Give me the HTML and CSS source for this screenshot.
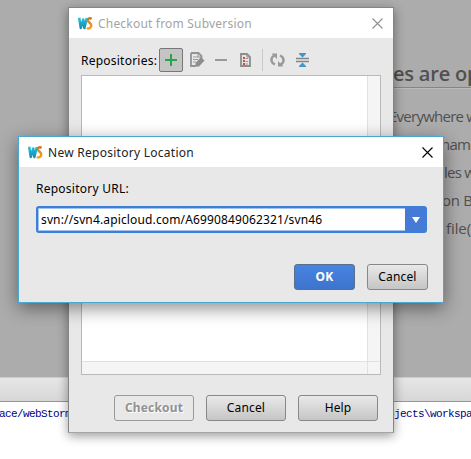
FILE: index.html
```html
<!DOCTYPE html>
<html lang="en">
<head>
<meta charset="utf-8">
<title>Checkout from Subversion</title>
<link rel="stylesheet" href="styles.css">
</head>
<body>
<svg class="defs" width="0" height="0">
  <defs>
    <linearGradient id="gw" x1="0" y1="0" x2="0" y2="1"><stop offset="0" stop-color="#1fc4dc"/><stop offset="1" stop-color="#1b8db5"/></linearGradient>
    <linearGradient id="gs" x1="0" y1="0" x2="0" y2="1"><stop offset="0" stop-color="#c9782c"/><stop offset="1" stop-color="#f5a31c"/></linearGradient>
    <symbol id="logo" viewBox="0 0 15 13">
      <path d="M1.2 .8 2.800 11 5.200 2.500 6.400 11 8.800 1" fill="none" stroke="url(#gw)" stroke-width="2.500" stroke-linejoin="round"/>
      <path d="M13.600 1.900C11.400.5 9.500 1.800 10 4c.5 1.600 3.400 2 3.200 4.800-.2 2.500-2.400 3.200-4.400 2.200" fill="none" stroke="url(#gs)" stroke-width="2.500"/>
    </symbol>
  </defs>
</svg>
<div class="desktop">
  <main class="editor">
    <h1 class="heading">es are op</h1>
    <p class="hint hint1">Everywhere w</p>
    <p class="hint hint2">name</p>
    <p class="hint hint3">les w</p>
    <p class="hint hint4">on Ba</p>
    <p class="hint hint5">file(</p>
  </main>
  <div class="strip"></div>
  <div class="console"><span class="path">ace/webStorm</span><span class="path tail">ojects\workspa</span></div>
</div>

<section class="dialog checkout">
  <header class="titlebar">
    <svg class="logo" width="15" height="13"><use href="#logo"/></svg>
    <span class="title">Checkout from Subversion</span>
    <svg class="close" width="11" height="11" viewBox="0 0 11 11"><path d="M.5.5l10 10M10.500.5l-10 10"/></svg>
  </header>
  <div class="toolbar">
    <span class="label">Repositories:</span>
    <span class="tool active"><svg width="12" height="12" viewBox="0 0 12 12"><path d="M6 0v12M0 6h12" stroke="#26a644" stroke-width="2"/></svg></span>
    <svg class="edit" width="15" height="16" viewBox="0 0 15 16"><path d="M1 1h7.500l3 3v2M1 1v13h5" fill="none" stroke="#939393" stroke-width="1.800"/><path d="M3 5h5M3 7.500h5M3 10h3" stroke="#999"/><path d="M8 1v4h4" fill="none" stroke="#939393"/><path d="M11 5l3.500 3.500-5.500 6H5.500V11z" fill="#8d8d8d"/></svg>
    <span class="minus"></span>
    <svg class="details" width="11" height="14" viewBox="0 0 11 14"><path d="M1 1h6l3 3v9H1z" fill="#e5e5e5" stroke="#8d8d8d" stroke-width="1.800"/><path d="M7 1v3h3" fill="none" stroke="#8d8d8d"/><path d="M3 4h2v2H3zM3 7h2v2H3zM3 10h2v2H3z" fill="#c9503f"/><path d="M5.500 5.500H8M5.500 8.500H8M5.500 11H8" stroke="#999"/></svg>
    <span class="separator"></span>
    <svg class="refresh" width="15" height="14" viewBox="0 0 15 14"><g fill="none" stroke="#999" stroke-width="2.400"><path d="M5 11.500C.3 9.500.300 4.500 4.600 2.200"/><path d="M10 2.500c4.700 2 4.700 7 .4 9.300"/></g><path d="M1.500 .5h5.500v5.500zM13.500 13.500H8V8z" fill="#999"/></svg>
    <svg class="collapse" width="13" height="14" viewBox="0 0 13 14"><path d="M0 5.500h13M0 8.500h13" stroke="#858585" stroke-width="1.400"/><path d="M3 0h7v1L6.500 4.500 3 1zM3 14h7v-1L6.500 9.500 3 13z" fill="#4097cd"/></svg>
  </div>
  <div class="list"><div class="rows"></div><div class="vscroll"></div><div class="hscroll"></div><div class="corner"></div></div>
  <footer class="actions">
    <button class="btn disabled" disabled><span>Checkout</span></button>
    <button class="btn"><span>Cancel</span></button>
    <button class="btn"><span>Help</span></button>
  </footer>
</section>

<section class="dialog location">
  <header class="titlebar">
    <svg class="logo" width="15" height="13"><use href="#logo"/></svg>
    <span class="title">New Repository Location</span>
    <svg class="close" width="11" height="11" viewBox="0 0 11 11"><path d="M.5.5l10 10M10.500.5l-10 10"/></svg>
  </header>
  <div class="form">
    <div class="label">Repository URL:</div>
    <div class="combo"><span class="value">svn://svn4.apicloud.com/A6990849062321/svn46</span><span class="drop"></span></div>
    <footer class="confirm">
      <button class="btn primary"><span>OK</span></button>
      <button class="btn"><span>Cancel</span></button>
    </footer>
  </div>
</section>
</body>
</html>
```
FILE: styles.css
```css
* { box-sizing: border-box; }
body { margin: 0; width: 471px; height: 459px; overflow: hidden; position: relative; font: 12px/16px "Noto Sans", "Open Sans", sans-serif; color: #000; background: #fff; }
.defs { position: absolute; }
.desktop { width: 471px; height: 459px; overflow: hidden; }
.editor { height: 377px; background: #acacac; padding: 60px 0 0 393px; white-space: nowrap; overflow: hidden; color: #505050; }
.heading { margin: 0; height: 28px; font: 600 20px/28px "Open Sans", sans-serif; letter-spacing: -.2px; border-bottom: 1px solid #858585; box-shadow: 0 1px #bcbcbc; color: #505050; }
.hint { margin: 0; height: 28px; font: 15px/28px "Open Sans", sans-serif; letter-spacing: -.75px; }
.hint1 { margin-top: 14px; margin-left: -4px; }
.hint2 { margin-left: 48px; }
.hint3 { margin-left: 51px; }
.hint4 { margin-left: 49px; letter-spacing: -.3px; }
.hint5 { margin-left: 53px; letter-spacing: -.1px; }
.strip { height: 25px; border-top: 1px solid #cecece; border-bottom: 1px solid #969696; background: linear-gradient(#e6e6e6, #d7d7d7); }
.console { display: flex; height: 57px; padding-top: 5px; font: 11px/14px "Liberation Mono", monospace; letter-spacing: -.6px; color: #000080; white-space: pre; }
.path { flex: none; width: 388px; margin-left: -1px; }
.tail { margin-left: 1px; }

.dialog { position: absolute; background: #e8e8e8; display: flex; flex-direction: column; }
.checkout { left: 68px; top: 7px; width: 326px; height: 426px; border: 1px solid #858585; border-bottom-color: #a5a5a5; box-shadow: 0 3px 10px rgba(0,0,0,.4); }
.location { left: 18px; top: 136px; width: 426px; height: 167px; border: 1px solid #4aa9d2; box-shadow: 0 5px 17px rgba(0,0,0,.46); }
.titlebar { flex: none; height: 30px; display: flex; align-items: center; background: #fff; padding: 0 10px 0 9px; }
.title { margin-left: 5px; flex: 1; white-space: nowrap; color: #222; letter-spacing: .27px; padding-top: 1px; }
.checkout .title { color: #a3a3a3; letter-spacing: .2px; }
.close { fill: none; stroke: #000; stroke-width: 1.1; }
.checkout .close { stroke: #909090; }
.toolbar { display: flex; align-items: center; height: 24px; margin: 10px 12px 0; }
.toolbar > * { flex: none; }
.toolbar .label { width: 78px; letter-spacing: .23px; padding-top: 2px; }
.tool { width: 24px; height: 24px; display: flex; align-items: center; justify-content: center; }
.active { background: #c4c4c4; border: 1px solid #777; border-radius: 2px; }
.edit { margin-left: 7px; }
.minus { width: 12px; height: 2px; background: #999; margin-left: 10px; }
.details { margin-left: 13px; }
.separator { width: 1px; height: 22px; background: #c9c9c9; margin-left: 11px; }
.refresh { margin-left: 7px; }
.collapse { margin-left: 11px; }
.list { flex: none; width: 300px; height: 300px; margin: 3px 12px 0; border: 1px solid #b9b9b9; background: #fff; display: grid; grid-template: 285px 13px / 285px 13px; }
.vscroll, .corner { border-left: 1px solid #e1e1e1; background: #f5f5f5; }
.hscroll, .corner { border-top: 1px solid #e1e1e1; background: #f5f5f5; }
.actions { display: flex; gap: 12px; margin: 20px 0 0 45px; }
.btn { width: 80px; height: 26px; padding: 0; border: 1px solid #888; border-radius: 3px; background: linear-gradient(#e9e9e9, #c5c5c5); font: 12px/16px "Noto Sans", sans-serif; letter-spacing: .15px; color: #000; }
.disabled { background: transparent; border-color: #999; color: #929292; font-weight: 700; text-shadow: 1px 1px #fff; }
.form { padding: 14px 17px 0; }
.form .label { height: 16px; letter-spacing: .25px; }
.combo { display: flex; width: 391px; height: 27px; margin-top: 9px; border: 2px solid #3c7fd4; border-radius: 3px; background: #fff; box-shadow: inset 0 0 0 1px #9fc3ee; }
.value { flex: 1; padding-left: 3px; line-height: 24px; white-space: nowrap; letter-spacing: .14px; }
.drop { width: 21px; background: #457bd7; display: flex; align-items: center; justify-content: center; margin-right: -1px; }
.drop::before { content: ""; border: 4px solid transparent; border-top: 6px solid #fff; border-bottom: 0; }
.confirm { display: flex; justify-content: flex-end; gap: 12px; margin: 31px -2px 0 0; }
.confirm .btn { width: 61px; }
.btn.primary { background: linear-gradient(#4784e2, #3d74cd); border-color: #5b6e8c; color: #fff; font-weight: 700; }
```
